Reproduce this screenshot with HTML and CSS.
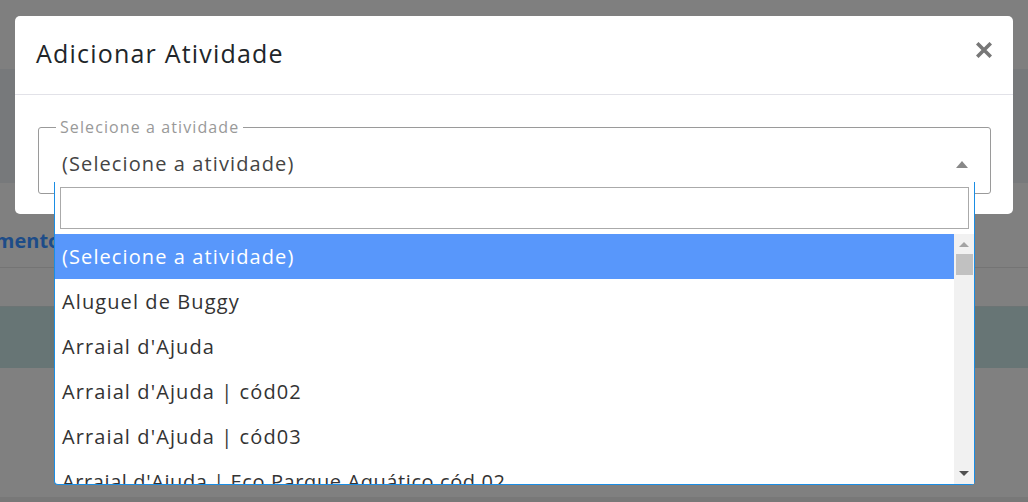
FILE: index.html
```html
<!DOCTYPE html>
<html>
  <head>
    <title>Adicionar Atividade</title>
    <meta name="viewport" content="width=device-width, initial-scale=1">
    <link rel="stylesheet" href="styles.css">
  </head>
  <body>
    <!-- page behind the modal backdrop -->
    <div class="page">
      <div class="navbar"></div>
      <div class="hero"></div>
      <div class="tabs">
        <span class="tab-label">Agendamento</span>
      </div>
      <div class="gap"></div>
      <div class="band"></div>
      <div class="rest"></div>
      <div class="footer"></div>
    </div>

    <div class="modal">
      <div class="modal-header">
        <h4 class="modal-title">Adicionar Atividade</h4>
        <span class="modal-close">
          <svg width="16" height="16" viewBox="0 0 16 16">
            <path d="M2.5 2.5 L13.5 13.5 M13.5 2.5 L2.5 13.5" stroke="#777" stroke-width="3.6" stroke-linecap="square"/>
          </svg>
        </span>
      </div>
      <div class="modal-body">
        <fieldset class="select-field">
          <legend>Selecione a atividade</legend>
          <div class="select-value">
            <span>(Selecione a atividade)</span>
            <span class="arrow-up"></span>
          </div>
        </fieldset>
      </div>
    </div>

    <div class="dropdown">
      <div class="search-wrap">
        <input type="text" class="search">
      </div>
      <div class="results">
        <ul class="options">
          <li class="highlighted">(Selecione a atividade)</li>
          <li>Aluguel de Buggy</li>
          <li>Arraial d'Ajuda</li>
          <li>Arraial d'Ajuda | cód02</li>
          <li>Arraial d'Ajuda | cód03</li>
          <li class="long">Arraial d'Ajuda | Eco Parque Aquático cód 02</li>
        </ul>
        <div class="scrollbar">
          <span class="sb-up"></span>
          <span class="sb-thumb"></span>
          <span class="sb-space"></span>
          <span class="sb-down"></span>
        </div>
      </div>
    </div>
  </body>
</html>
```

FILE: styles.css
```css
body {
  margin: 0;
  font-family: "Open Sans", "Noto Sans", sans-serif;
  background-color: #808080;
  overflow: hidden;
}

.page {
  height: 502px;
  display: flex;
  flex-direction: column;
}

.navbar {
  height: 69px;
  background-color: #7f7f7f;
}

.hero {
  height: 114px;
  background-color: #77797b;
}

.tabs {
  height: 84px;
  border-bottom: 1px solid #747474;
  display: flex;
  align-items: center;
  overflow: hidden;
}

.tab-label {
  margin-left: -80px;
  margin-top: 30px;
  font-size: 20px;
  font-weight: 700;
  color: #1d4c88;
  white-space: nowrap;
}

.gap {
  height: 38px;
}

.band {
  height: 61px;
  background-color: #677575;
  border-top: 1px solid #6c7474;
}

.rest {
  flex: 1;
}

.footer {
  height: 5px;
  background-color: #787878;
}

/* modal */
.modal {
  position: absolute;
  left: 15px;
  top: 16px;
  width: 998px;
  height: 198px;
  background-color: #fff;
  border-radius: 5px;
}

.modal-header {
  height: 78px;
  border-bottom: 1px solid #e2e2e8;
  display: flex;
  align-items: center;
  justify-content: space-between;
  padding: 0 21px;
}

.modal-title {
  margin: -4px 0 0 0;
  font-size: 25px;
  font-weight: 400;
  letter-spacing: 1.2px;
  color: #212529;
}

.modal-close {
  display: flex;
  margin-top: -10px;
}

.modal-body {
  padding: 23px 22px 0 23px;
}

.select-field {
  margin: 0;
  padding: 0;
  border: 1px solid #9a9a9a;
  border-radius: 3px;
}

.select-field legend {
  margin-left: 17px;
  padding: 0 4px;
  font-size: 16px;
  line-height: 18px;
  letter-spacing: 1.1px;
  color: #999;
}

.select-value {
  height: 57px;
  padding: 0 22px 0 23px;
  display: flex;
  align-items: center;
  justify-content: space-between;
  font-size: 20px;
  letter-spacing: 1.1px;
  color: #444;
}

.select-value span:first-child {
  margin-top: -3px;
}

.arrow-up {
  width: 0;
  height: 0;
  border-left: 6px solid transparent;
  border-right: 6px solid transparent;
  border-bottom: 7px solid #888;
}

/* dropdown */
.dropdown {
  position: absolute;
  left: 54px;
  top: 182px;
  width: 919px;
  height: 302px;
  background-color: #fff;
  border: 1px solid #1a8de4;
  border-top: none;
  border-radius: 0 0 4px 4px;
  display: flex;
  flex-direction: column;
}

.search-wrap {
  padding: 5px 5px 5px 5px;
}

.search {
  display: block;
  box-sizing: border-box;
  width: 100%;
  height: 42px;
  margin: 0;
  border: 1px solid #aaa;
  outline: none;
}

.results {
  flex: 1;
  display: flex;
  overflow: hidden;
}

.options {
  flex: 1;
  margin: 0;
  padding: 0;
  list-style: none;
  overflow: hidden;
}

.options li {
  height: 45px;
  padding-left: 7px;
  display: flex;
  align-items: center;
  font-size: 20px;
  letter-spacing: 1.1px;
  color: #333;
  white-space: nowrap;
}

.options li.long {
  letter-spacing: 0.6px;
}

.options li.highlighted {
  background-color: #5897fb;
  color: #fff;
}

.scrollbar {
  width: 20px;
  background-color: #f1f1f1;
  display: flex;
  flex-direction: column;
  align-items: center;
}

.sb-up,
.sb-down {
  width: 0;
  height: 0;
  border-left: 5px solid transparent;
  border-right: 5px solid transparent;
}

.sb-up {
  margin-top: 8px;
  border-bottom: 5px solid #a3a3a3;
}

.sb-down {
  margin-bottom: 8px;
  border-top: 5px solid #505050;
}

.sb-thumb {
  margin-top: 7px;
  width: 17px;
  height: 21px;
  background-color: #c1c1c1;
}

.sb-space {
  flex: 1;
}
```
